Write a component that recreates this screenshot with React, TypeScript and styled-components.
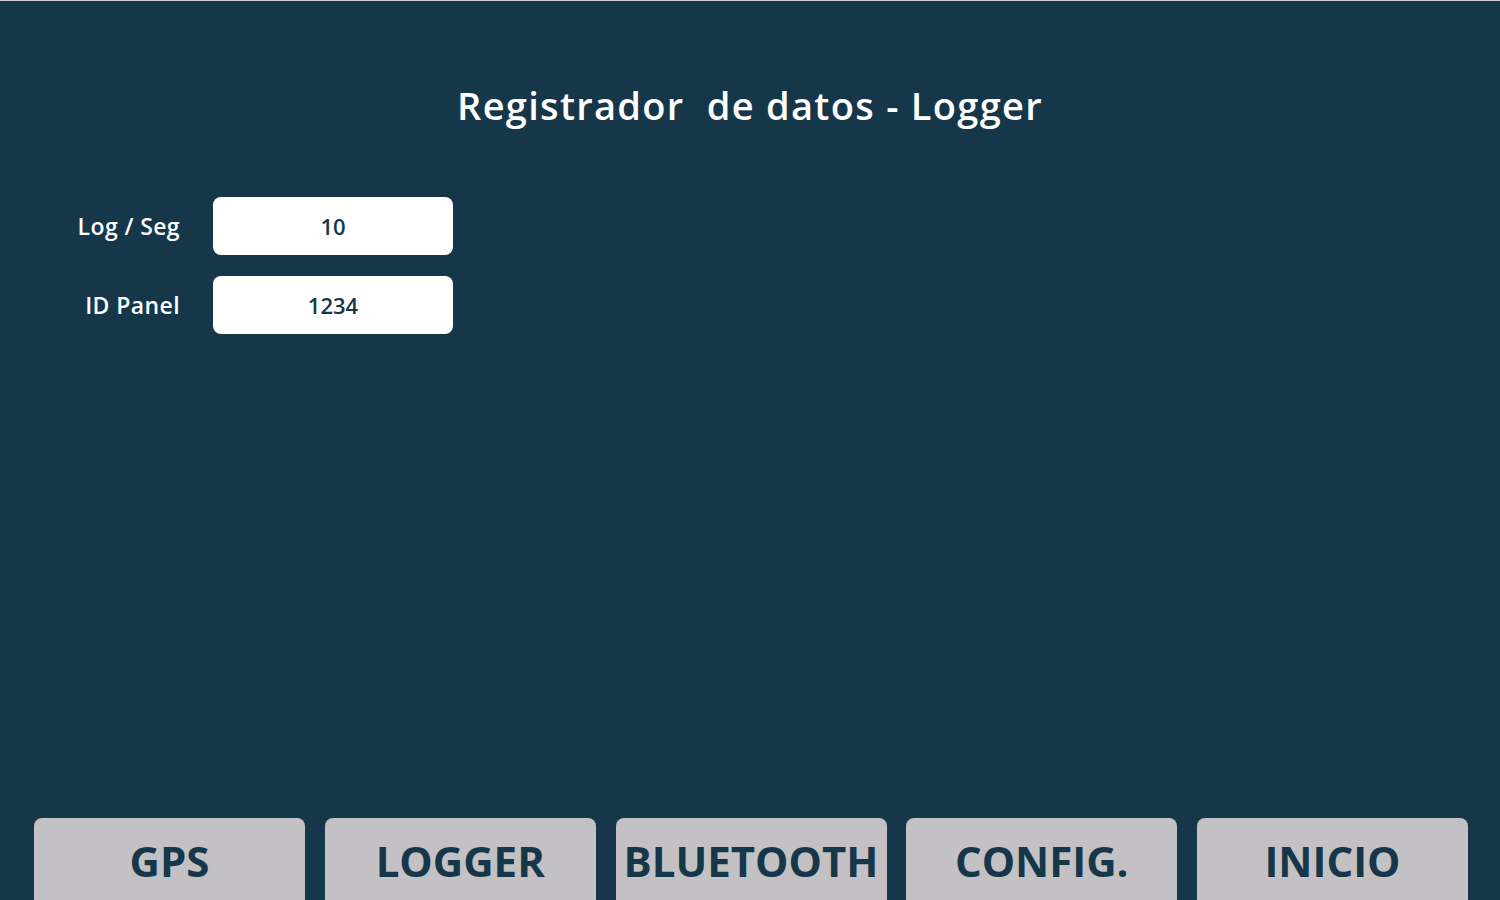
import React from "react";
import styled, { createGlobalStyle } from "styled-components";

const Global = createGlobalStyle`
  html, body { margin: 0; padding: 0; background: #16374a; }
  body { font-family: "Open Sans", "Noto Sans", sans-serif; }
`;

const Screen = styled.div`
  width: 1500px;
  height: 900px;
  box-sizing: border-box;
  border-top: 1px solid #c9cbcd;
  background: #16374a;
  display: flex;
  flex-direction: column;
  overflow: hidden;
`;

const Title = styled.h1`
  margin: 0;
  padding-top: 79px;
  height: 50px;
  line-height: 50px;
  text-align: center;
  color: #ffffff;
  font-size: 38px;
  font-weight: 600;
  letter-spacing: 1.3px;
  white-space: pre;
`;

const Form = styled.div`
  margin-top: 67px;
  display: grid;
  grid-template-columns: 180px 240px;
  column-gap: 33px;
  row-gap: 21px;
  align-items: center;
`;

const Label = styled.div`
  text-align: right;
  color: #ffffff;
  font-size: 23px;
  font-weight: 600;
  letter-spacing: 0.4px;
`;

const Field = styled.div`
  height: 58px;
  border-radius: 8px;
  background: #ffffff;
  display: flex;
  align-items: center;
  justify-content: center;
  color: #16374a;
  font-size: 22px;
  font-weight: 600;
`;

const Spacer = styled.div`
  flex: 1;
`;

const NavBar = styled.div`
  display: grid;
  grid-template-columns: repeat(5, 271px);
  column-gap: 19.75px;
  padding-left: 34px;
  height: 82px;
`;

const NavButton = styled.div`
  height: 92px;
  border-radius: 8px;
  background: #c3c1c4;
  display: flex;
  justify-content: center;
  padding-top: 20px;
  box-sizing: border-box;
  color: #16374a;
  font-size: 42px;
  font-weight: 700;
  line-height: 46px;
  white-space: nowrap;
`;

const fields = [
  { label: "Log / Seg", value: "10" },
  { label: "ID Panel", value: "1234" },
];

const tabs = ["GPS", "LOGGER", "BLUETOOTH", "CONFIG.", "INICIO"];

export default function App() {
  return (
    <>
      <Global />
      <Screen>
        <Title>{"Registrador  de datos - Logger"}</Title>
        <Form>
          {fields.map((f) => (
            <React.Fragment key={f.label}>
              <Label>{f.label}</Label>
              <Field>{f.value}</Field>
            </React.Fragment>
          ))}
        </Form>
        <Spacer />
        <NavBar>
          {tabs.map((t) => (
            <NavButton key={t}>{t}</NavButton>
          ))}
        </NavBar>
      </Screen>
    </>
  );
}
